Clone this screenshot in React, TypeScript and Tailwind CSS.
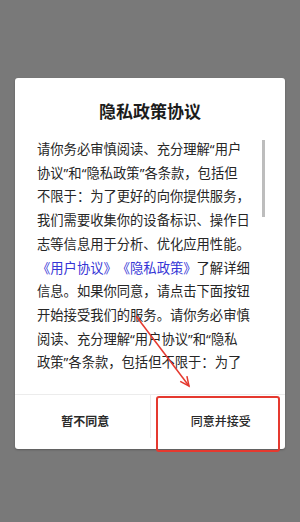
import React from "react";

const lines: React.ReactNode[] = [
  "请你务必审慎阅读、充分理解“用户",
  "协议”和“隐私政策”各条款，包括但",
  "不限于：为了更好的向你提供服务，",
  "我们需要收集你的设备标识、操作日",
  "志等信息用于分析、优化应用性能。",
  <>
    <span className="text-[#3535d6]">《用户协议》《隐私政策》</span>了解详细
  </>,
  "信息。如果你同意，请点击下面按钮",
  "开始接受我们的服务。请你务必审慎",
  "阅读、充分理解“用户协议”和“隐私",
  "政策”各条款，包括但不限于：为了",
];

export default function App() {
  return (
    <div className="relative min-h-[522px] w-[300px] bg-[#797979] pt-[78px] px-[15px] font-[family-name:'Noto_Sans','Noto_Sans_CJK_SC',sans-serif] [text-spacing-trim:space-all]">
      <div className="bg-white rounded-[3px] shadow-[0_1px_2px_rgba(0,0,0,0.25)] flex flex-col h-[371px]">
        <div className="pt-[22px] h-[46px] text-center text-[17px] leading-[24px] font-semibold text-[#1c1c1c]">
          隐私政策协议
        </div>
        <div className="relative mt-[14px] ml-[22px] mr-[20px] h-[238px] overflow-hidden">
          <div className="text-[13.3px] leading-[23.7px] text-[#262626] whitespace-nowrap">
            {lines.map((l, i) => (
              <div key={i}>{l}</div>
            ))}
          </div>
          <div className="absolute right-0 top-[2px] w-[3px] h-[77px] bg-[#bdbdbd]" />
        </div>
        <div className="mt-[18px] border-t border-[#ececec] flex flex-1">
          <div className="flex-1 flex items-center justify-center text-[12px] font-semibold text-[#2a2a2a] pl-[6px]">
            暂不同意
          </div>
          <div className="w-px h-[43px] bg-[#ececec]" />
          <div className="flex-1 flex items-center justify-center text-[12px] font-medium text-[#2a2a2a] pl-[6px]">
            同意并接受
          </div>
        </div>
      </div>
      <div className="absolute left-[156px] top-[396px] w-[124px] h-[56px] border-2 border-[#e5392f] rounded-[3px]" />
      <svg className="absolute left-0 top-0" width="300" height="522" viewBox="0 0 300 522">
        <line x1="136" y1="316" x2="189" y2="386" stroke="#e5392f" strokeWidth="1.5" />
        <polyline points="186.9,376.2 189,386 180.2,381.3" fill="none" stroke="#e5392f" strokeWidth="1.5" />
      </svg>
    </div>
  );
}
